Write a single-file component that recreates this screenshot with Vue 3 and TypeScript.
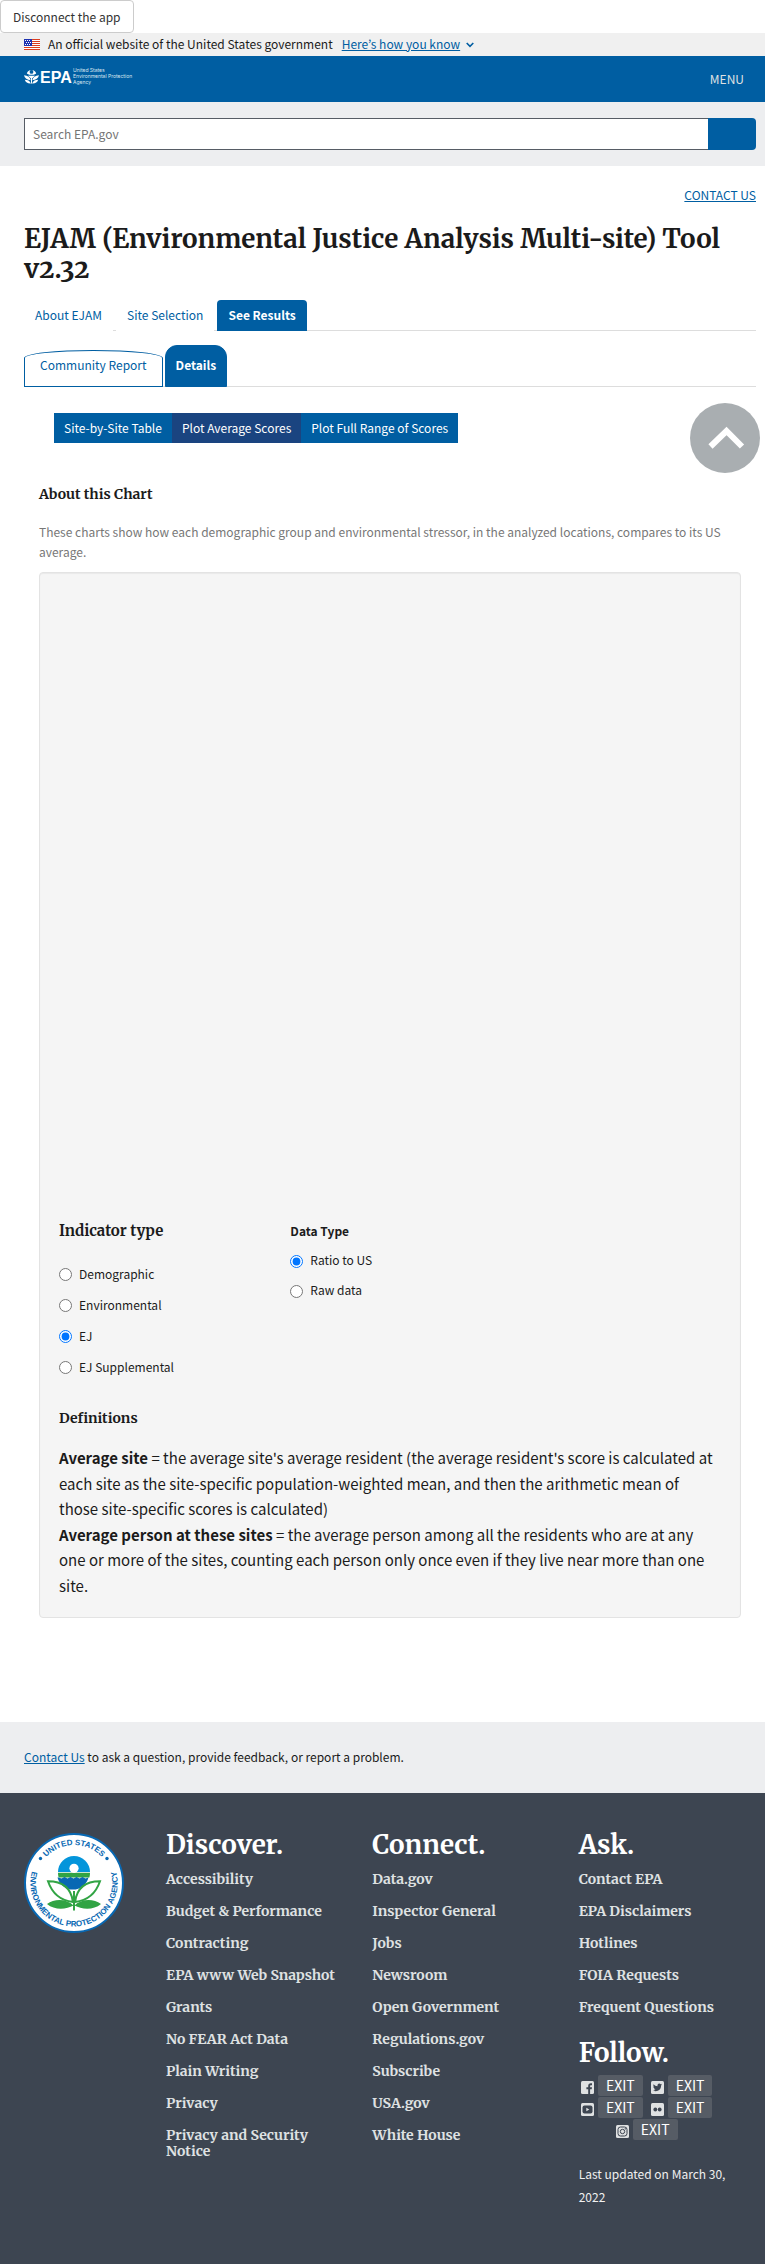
<script setup lang="ts">
import { ref } from 'vue'

const mainTabs = ['About EJAM', 'Site Selection', 'See Results']
const subTabs = ['Community Report', 'Details']
const views = ['Site-by-Site Table', 'Plot Average Scores', 'Plot Full Range of Scores']
const mainTab = ref('See Results')
const subTab = ref('Details')
const view = ref('Plot Average Scores')

const indicators = ['Demographic', 'Environmental', 'EJ', 'EJ Supplemental']
const dataTypes = ['Ratio to US', 'Raw data']
const indicator = ref('EJ')
const dataType = ref('Ratio to US')
const query = ref('')

const discover = [
  'Accessibility', 'Budget & Performance', 'Contracting', 'EPA www Web Snapshot', 'Grants',
  'No FEAR Act Data', 'Plain Writing', 'Privacy', 'Privacy and Security Notice',
]
const connect = [
  'Data.gov', 'Inspector General', 'Jobs', 'Newsroom', 'Open Government',
  'Regulations.gov', 'Subscribe', 'USA.gov', 'White House',
]
const ask = ['Contact EPA', 'EPA Disclaimers', 'Hotlines', 'FOIA Requests', 'Frequent Questions']
const socials = ['facebook', 'twitter', 'youtube', 'flickr', 'instagram']
</script>

<template>
  <div class="page">
    <button class="disconnect" type="button">Disconnect the app</button>

    <section class="banner" aria-label="Official government website">
      <svg class="flag" width="16" height="11" viewBox="0 0 16 11" aria-hidden="true">
        <rect width="16" height="11" fill="#fff" />
        <path d="M0 .5h16M0 2.5h16M0 4.5h16M0 6.5h16M0 8.5h16M0 10.5h16" stroke="#db3e1f" />
        <rect width="8" height="7" fill="#1e33b1" />
        <path
          d="M1 1.5h1M3 1.5h1M5 1.5h1M2 3.5h1M4 3.5h1M6 3.5h1M1 5.5h1M3 5.5h1M5 5.5h1"
          stroke="#fff"
        />
      </svg>
      <span>An official website of the United States government</span>
      <button class="how" type="button">
        <span>Here’s how you know</span>
        <svg width="8" height="6" viewBox="0 0 8 6" aria-hidden="true">
          <path d="M.7 1L4 4.300 7.300 1" fill="none" stroke="#005ea2" stroke-width="1.6" />
        </svg>
      </button>
    </section>

    <header class="header">
      <a class="logo" href="#" aria-label="US EPA">
        <svg width="116" height="20" viewBox="0 0 116 20" aria-hidden="true">
          <g fill="#fff">
            <path
              fill-rule="evenodd"
              d="M2.800 6.500a4.900 4.900 0 0 1 9.400 0l-2.400 1.300H5.200zM7.500 3a1.900 1.900 0 1 0 0 3.800 1.900 1.900 0 0 0 0-3.800z"
            />
            <path d="M4 8.800h7L7.500 12z" />
            <path d="M0 8.300c4 .6 6 2 6.700 4.900C3.200 12.800.6 11.400 0 8.300z" />
            <path d="M15 8.300c-4 .6-6 2-6.700 4.900 3.500-.4 6.100-1.800 6.700-4.900z" />
            <path d="M.8 12.800c2.900.2 4.900.9 6.100 3.600-3 .2-5.200-.8-6.100-3.600zM14.200 12.800c-2.900.2-4.900.9-6.100 3.600 3 .2 5.200-.8 6.100-3.600z" />
            <path d="M7 11h1v5.500H7z" />
          </g>
          <text class="epa" x="16" y="16">EPA</text>
          <g class="agency">
            <text x="49" y="5">United States</text>
            <text x="49" y="11">Environmental Protection</text>
            <text x="49" y="17">Agency</text>
          </g>
        </svg>
      </a>
      <button class="menu" type="button">MENU</button>
    </header>

    <form class="search" role="search" @submit.prevent>
      <input v-model="query" type="search" placeholder="Search EPA.gov" aria-label="Search EPA.gov" />
      <button type="submit" aria-label="Search"></button>
    </form>

    <main class="main">
      <div class="contact-top"><a href="#">CONTACT US</a></div>
      <h1>EJAM (Environmental Justice Analysis Multi-site) Tool v2.32</h1>

      <nav class="tabs" aria-label="Sections">
        <a v-for="t in mainTabs" :key="t" href="#" :class="{ active: t === mainTab }" @click.prevent="mainTab = t">{{ t }}</a>
      </nav>
      <nav class="subtabs" aria-label="Results">
        <a v-for="t in subTabs" :key="t" href="#" :class="{ active: t === subTab }" @click.prevent="subTab = t">{{ t }}</a>
      </nav>

      <div class="results">
        <a class="to-top" href="#" aria-label="Back to top">
          <svg width="40" height="28" viewBox="0 0 40 28" aria-hidden="true">
            <path d="M5.500 22.500L21.500 7l15.500 15.500" fill="none" stroke="#fff" stroke-width="6" />
          </svg>
        </a>
        <nav class="views" aria-label="Detail views">
          <a v-for="v in views" :key="v" href="#" :class="{ active: v === view }" @click.prevent="view = v">{{ v }}</a>
        </nav>

        <h2 class="about">About this Chart</h2>
        <p class="intro">
          These charts show how each demographic group and environmental stressor, in the analyzed
          locations, compares to its US average.
        </p>

        <section class="well">
          <div class="plot"></div>
          <div class="options">
            <fieldset class="indicator">
              <legend class="serif">Indicator type</legend>
              <label v-for="i in indicators" :key="i">
                <input v-model="indicator" type="radio" name="indicator" :value="i" />
                <span>{{ i }}</span>
              </label>
            </fieldset>
            <fieldset class="datatype">
              <legend>Data Type</legend>
              <label v-for="d in dataTypes" :key="d">
                <input v-model="dataType" type="radio" name="datatype" :value="d" />
                <span>{{ d }}</span>
              </label>
            </fieldset>
          </div>
          <h3 class="serif definitions">Definitions</h3>
          <p class="text">
            <b>Average site</b> = the average site's average resident (the average resident's score is
            calculated at each site as the site-specific population-weighted mean, and then the
            arithmetic mean of those site-specific scores is calculated)
          </p>
          <p class="text">
            <b>Average person at these sites</b> = the average person among all the residents who are
            at any one or more of the sites, counting each person only once even if they live near
            more than one site.
          </p>
        </section>
      </div>
    </main>

    <aside class="contact-bar">
      <p><a href="#">Contact Us</a> to ask a question, provide feedback, or report a problem.</p>
    </aside>

    <footer class="footer">
      <svg class="seal" width="100" height="100" viewBox="0 0 100 100" role="img" aria-label="EPA seal">
        <defs>
          <path id="ring-top" d="M12 50a38 38 0 0 1 76 0" />
          <path id="ring-bottom" d="M12.200 28.200a43.600 43.600 0 1 0 75.600 0" />
        </defs>
        <circle cx="50" cy="50" r="49" fill="#fff" stroke="#0868b3" stroke-width="2" />
        <text class="ring"><textPath href="#ring-top" startOffset="50%" text-anchor="middle">UNITED STATES</textPath></text>
        <text class="ring"><textPath href="#ring-bottom" startOffset="50%" text-anchor="middle">ENVIRONMENTAL PROTECTION AGENCY</textPath></text>
        <circle cx="16.500" cy="25.500" r="1.700" fill="#0868b3" />
        <circle cx="83" cy="25.500" r="1.700" fill="#0868b3" />
        <path d="M34 39a16 16 0 0 1 32 0z" fill="#0495db" />
        <path d="M34 39.800h32q0 2.500-.6 4.800H34.600q-.6-2.300-.6-4.800z" fill="#31a444" />
        <path d="M34.500 44.500l3 1 3-1.500 3 1.500 3-1.500 3 1.500 3-1.500 3 1.500 3-1.500 3 1.500 3-1a16 16 0 0 1-31 0z" fill="#0868b3" />
        <circle cx="50" cy="35.300" r="4.600" fill="#fff" />
        <g fill="none" stroke="#31a444" stroke-width="2">
          <path d="M50 58v19.500" />
          <path d="M49 69C40 68 29 63 24 48.300c13 0 23 6 25 20.700z" />
          <path d="M51 69c9-1 20-6 25-20.700-13 0-23 6-25 20.700z" />
        </g>
        <path d="M23 71c8-6 20-5 26.500 1.500-7 4-19 5-26.500-1.500zM77 71c-8-6-20-5-26.500 1.500 7 4 19 5 26.500-1.500z" fill="#31a444" />
      </svg>

      <div class="columns">
        <nav>
          <h2>Discover.</h2>
          <ul><li v-for="l in discover" :key="l"><a href="#">{{ l }}</a></li></ul>
        </nav>
        <nav>
          <h2>Connect.</h2>
          <ul><li v-for="l in connect" :key="l"><a href="#">{{ l }}</a></li></ul>
        </nav>
        <div>
          <h2>Ask.</h2>
          <ul><li v-for="l in ask" :key="l"><a href="#">{{ l }}</a></li></ul>
          <h2 class="follow">Follow.</h2>
          <div class="socials">
            <a v-for="s in socials" :key="s" href="#" :aria-label="s">
              <svg width="13" height="13" viewBox="0 0 13 13" aria-hidden="true">
                <rect width="13" height="13" rx="1.500" fill="#dfe1e2" />
                <path v-if="s === 'facebook'" d="M7.200 13V8.300H5.400V6.300h1.800V5c0-1.800 1-2.700 2.600-2.700h1.200v1.900h-.9c-.8 0-1 .4-1 1v1.100h1.900l-.3 2H9.100V13z" fill="#3d4551" />
                <path v-else-if="s === 'twitter'" d="M11 3.600l-.9 1c0 3.700-2.500 5.700-5.300 5.700-1.100 0-2-.3-2.800-.8 1 .1 2-.2 2.700-.7-.8 0-1.500-.6-1.700-1.300h.8c-.9-.3-1.500-1-1.500-1.900l.8.200c-.8-.7-1-1.700-.5-2.500 1 1.200 2.300 1.900 3.900 2C6.200 3.900 7.100 2.600 8.300 2.600c.6 0 1 .2 1.400.6l1.200-.4-.8 1z" fill="#3d4551" />
                <template v-else-if="s === 'youtube'">
                  <rect x="1.500" y="2.500" width="10" height="8" rx="2" fill="#3d4551" />
                  <path d="M5.300 4.700v3.600l3-1.800z" fill="#dfe1e2" />
                </template>
                <template v-else-if="s === 'flickr'">
                  <circle cx="4.300" cy="6.500" r="1.900" fill="#3d4551" />
                  <circle cx="8.700" cy="6.500" r="1.900" fill="#3d4551" />
                </template>
                <g v-else fill="none" stroke="#3d4551">
                  <rect x="2" y="2" width="9" height="9" rx="2.500" />
                  <circle cx="6.500" cy="6.500" r="2.200" />
                  <circle cx="9.200" cy="3.900" r=".3" />
                </g>
              </svg>
              <span>EXIT</span>
            </a>
          </div>
          <p class="updated">Last updated on March 30, 2022</p>
        </div>
      </div>
    </footer>
  </div>
</template>

<style>
body {
  margin: 0;
  background: #fff;
}
</style>

<style scoped>
* {
  box-sizing: border-box;
}
.page {
  display: flex;
  flex-direction: column;
  min-height: 100vh;
  font-family: "Source Sans Pro", "Noto Sans CJK KR", "Open Sans", sans-serif;
  font-size: 12px;
  line-height: 20px;
  color: #1b1b1b;
}
button,
input {
  font: inherit;
}
a {
  color: #005ea2;
}
h1,
h2,
.serif {
  font-family: Merriweather, "Noto Serif", "DejaVu Serif Condensed", serif;
  font-weight: 700;
  margin: 0;
}
.disconnect {
  align-self: flex-start;
  height: 33px;
  padding: 0 12px;
  border: 1px solid #ccc;
  border-radius: 4px;
  background: #fff;
  color: #333;
}
.banner {
  display: flex;
  align-items: center;
  height: 23px;
  padding: 0 24px 2px;
  background: #f0f0f0;
}
.flag {
  margin: 2px 8px 0 0;
}
.how {
  display: flex;
  align-items: center;
  gap: 6px;
  margin-left: 9px;
  padding: 0;
  border: 0;
  background: none;
  color: #005ea2;
}
.how span {
  text-decoration: underline;
}
.how svg {
  margin-top: 3px;
}
.header {
  display: flex;
  justify-content: space-between;
  align-items: center;
  height: 46px;
  padding: 0 9px 0 24px;
  background: #005ea2;
}
.logo {
  height: 24px;
}
.logo svg {
  display: block;
  overflow: visible;
}
.epa {
  font: 700 16px "Liberation Sans", Arial, sans-serif;
  fill: #fff;
}
.agency {
  font: 5px Inter, "Liberation Sans", Arial, sans-serif;
  fill: #d9e6f0;
}
.menu {
  padding: 0 12px;
  border: 0;
  background: none;
  color: #dfe1e2;
}
.search {
  display: flex;
  height: 64px;
  padding: 16px 9px 16px 24px;
  background: #edeef0;
}
.search input {
  flex: 1;
  min-width: 0;
  padding: 0 8px;
  border: 1px solid #565c65;
  border-right: 0;
  border-radius: 0;
  background: #fff;
  outline: 0;
  appearance: none;
}
.search input::placeholder {
  color: #757575;
  opacity: 1;
}
.search button {
  width: 48px;
  border: 0;
  border-radius: 0 4px 4px 0;
  background: #005ea2;
}
.main {
  padding: 19px 9px 104px 24px;
}
.contact-top {
  text-align: right;
}
h1 {
  margin-top: 19px;
  font-size: 26px;
  line-height: 30px;
  font-variant-numeric: oldstyle-nums;
}
.tabs,
.subtabs {
  display: flex;
  align-items: flex-end;
  border-bottom: 1px solid #ddd;
}
.tabs {
  height: 47px;
  gap: 3px;
}
.tabs a,
.subtabs a {
  margin-bottom: -1px;
  text-decoration: none;
}
.tabs a {
  padding: 5px 11px;
  border-bottom: 1px solid #fff;
  background: #fff;
}
.tabs .active,
.subtabs .active {
  border-color: #005ea2;
  background: #005ea2;
  color: #fff;
  font-weight: 700;
}
.tabs .active {
  border-radius: 4px 4px 0 0;
}
.subtabs {
  margin-top: 14px;
  gap: 2px;
}
.subtabs a {
  padding: 4px 15px 11px;
  border: 1px solid #005ea2;
  border-radius: 50% 50% 0 0 / 8px 8px 0 0;
}
.subtabs .active {
  padding: 9px 10px 11px;
  border-radius: 12px 12px 0 0;
}
.results {
  position: relative;
  padding: 26px 15px 0;
}
.to-top {
  position: absolute;
  top: 16px;
  right: -4px;
  display: flex;
  align-items: center;
  justify-content: center;
  width: 70px;
  height: 70px;
  border-radius: 50%;
  background: #a9aeb1;
}
.views {
  display: flex;
  margin: 0 15px;
}
.views a {
  padding: 5px 10px;
  background: #005ea2;
  color: #fff;
  text-decoration: none;
}
.views .active {
  background: #1a4480;
}
.about {
  margin-top: 41px;
  font-size: 14px;
  line-height: 20px;
}
.intro {
  margin: 18px 0 10px;
  color: #777;
}
.well {
  padding: 19px;
  border: 1px solid #e3e3e3;
  border-radius: 4px;
  background: #f5f5f5;
  box-shadow: inset 0 1px 1px rgba(0, 0, 0, 0.05);
}
.plot {
  height: 629px;
}
.options {
  display: grid;
  grid-template-columns: 1fr 2fr;
  gap: 16px;
}
fieldset {
  min-width: 0;
  margin: 0;
  padding: 0;
  border: 0;
}
legend {
  padding: 0;
  font-weight: 700;
}
.serif {
  font-size: 14px;
  line-height: 20px;
}
.indicator legend {
  margin-bottom: 17px;
  font-size: 15px;
}
fieldset label {
  display: flex;
  align-items: center;
  gap: 7px;
  height: 30px;
}
.indicator label {
  height: 31px;
}
.datatype legend {
  margin-bottom: 4px;
}
input[type='radio'] {
  width: 13px;
  height: 13px;
  margin: 2px 0 0;
}
.definitions {
  margin: 26px 0 17px;
}
.text {
  margin: 0;
  font-size: 15px;
  line-height: 1.7;
}
.contact-bar {
  padding: 25px 24px 26px;
  background: #edeef0;
}
.contact-bar p {
  margin: 0;
}
.footer {
  flex: 1;
  display: flex;
  align-items: flex-start;
  gap: 42px;
  padding: 40px 16px 52px 24px;
  background: #3d4551;
}
.seal {
  flex: none;
}
.ring {
  font: 700 8px "Liberation Sans", Arial, sans-serif;
  fill: #0868b3;
}
.columns {
  flex: 1;
  display: grid;
  grid-template-columns: repeat(3, 1fr);
  gap: 36px;
}
.footer h2 {
  font-size: 26px;
  line-height: 24px;
  color: #fff;
}
.footer ul {
  margin: 14px 0 0;
  padding: 0;
  list-style: none;
}
.footer li {
  margin-bottom: 16px;
  font-family: Merriweather, "Noto Serif", "DejaVu Serif Condensed", serif;
  font-size: 14px;
  line-height: 16px;
  font-weight: 700;
}
.footer li a {
  color: #dfe1e2;
  text-decoration: none;
}
.footer .follow {
  margin-top: 26px;
}
.socials {
  display: flex;
  flex-wrap: wrap;
  justify-content: center;
  gap: 1px 8px;
  width: 136px;
  margin-top: 10px;
}
.socials a {
  display: flex;
  align-items: flex-end;
  gap: 4px;
  color: #fff;
  font-size: 14px;
  line-height: 21px;
  text-decoration: none;
}
.socials svg {
  margin-bottom: 2px;
}
.socials span {
  padding: 0 8px;
  border-radius: 2px;
  background: #565c65;
}
.updated {
  margin: 22px 0 0;
  line-height: 23px;
  color: #f0f0f0;
}
</style>
